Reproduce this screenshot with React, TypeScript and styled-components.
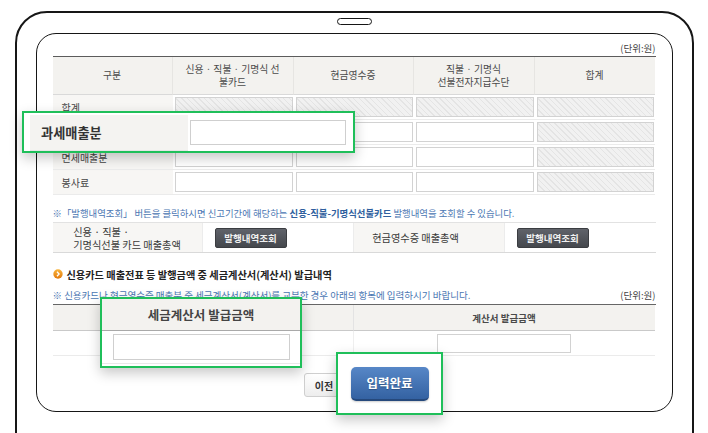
import React from "react";
import styled, { createGlobalStyle } from "styled-components";

const GlobalStyle = createGlobalStyle`
  html, body {
    margin: 0;
    padding: 0;
    background: #fff;
  }
  body {
    font-family: "Noto Sans CJK KR", "Noto Sans", sans-serif;
    color: #444;
  }
  * {
    box-sizing: border-box;
  }
`;

const Stage = styled.div`
  position: relative;
  width: 708px;
  height: 433px;
  overflow: hidden;
  background: #fff;
  padding: 11px 0 0 15px;
`;

const Tablet = styled.div`
  width: 679px;
  height: 480px;
  border: 2px solid #161616;
  border-radius: 32px;
  display: flex;
  flex-direction: column;
  align-items: center;
`;

const Speaker = styled.div`
  margin-top: 5px;
  width: 35px;
  height: 7px;
  border: 1.5px solid #161616;
  border-radius: 4px;
`;

const Screen = styled.div`
  margin-top: 8px;
  width: 637px;
  height: 379px;
  border: 1.5px solid #161616;
  border-radius: 20px;
  padding: 3px 16.5px 0 15.5px;
`;

const UnitRow = styled.div`
  height: 19px;
  line-height: 16px;
  text-align: right;
`;

const Unit = styled.span`
  font-size: 9.5px;
  color: #444;
`;

/* ---------- sales table ---------- */

const SalesGrid = styled.div`
  display: grid;
  grid-template-columns: 120px 121px 120px 121px 120px;
  grid-template-rows: 38px repeat(4, 25px);
  border-top: 1px solid #5c5c5c;
`;

const HeadCell = styled.div<{ $last?: boolean }>`
  display: flex;
  align-items: center;
  justify-content: center;
  text-align: center;
  background: #f3f2ef;
  border-bottom: 1px solid #d9d9d9;
  border-right: ${(p) => (p.$last ? "none" : "1px solid #e6e5e2")};
  font-size: 9.8px;
  line-height: 13px;
  color: #4a4a4a;
`;

const RowLabel = styled.div`
  display: flex;
  align-items: center;
  padding-left: 9px;
  background: #f7f6f4;
  border-bottom: 1px solid #ebebeb;
  font-size: 10px;
  color: #444;
`;

const FieldCell = styled.div`
  padding: 2px 1px 0 2px;
  border-bottom: 1px solid #ebebeb;
`;

const Field = styled.div<{ $locked?: boolean }>`
  height: 20px;
  border: 1px solid #d2d2d2;
  background: ${(p) =>
    p.$locked
      ? "repeating-linear-gradient(45deg, #e4e4e4 0 1px, #f1f1f1 1px 4px)"
      : "#fff"};
`;

/* ---------- notes / lookup ---------- */

const Note = styled.div`
  margin: 10px 0 1px;
  height: 16px;
  line-height: 16px;
  font-size: 9.4px;
  color: #4a76b2;
  white-space: nowrap;

  b {
    font-weight: 700;
    color: #2f5f9e;
  }
`;

const LookupGrid = styled.div`
  display: grid;
  grid-template-columns: 150px 151px 151px 150px;
  height: 31px;
  border-top: 1px solid #e2e2e2;
  border-bottom: 1px solid #d9d9d9;
`;

const LookupLabel = styled.div<{ $shift?: number }>`
  display: flex;
  align-items: center;
  justify-content: center;
  padding-right: ${(p) => p.$shift ?? 0}px;
  background: #f7f6f4;
  border-right: 1px solid #ececec;
  font-size: 10.2px;
  line-height: 13px;
  color: #3a3a3a;

  span {
    text-align: left;
  }
`;

const LookupAction = styled.div`
  display: flex;
  align-items: center;
  padding-left: 12px;
  border-right: 1px solid #ececec;

  &:last-child {
    border-right: none;
  }
`;

const DarkButton = styled.button`
  width: 72px;
  height: 20px;
  padding: 0;
  border: 1px solid #3b3d41;
  border-radius: 2px;
  background: linear-gradient(#60636a, #45484d);
  color: #f0f0f0;
  font-family: inherit;
  font-size: 9.5px;
  font-weight: 700;
  cursor: pointer;
`;

const SectionTitle = styled.h3`
  margin: 13px 0 0;
  height: 16px;
  display: flex;
  align-items: center;
  gap: 4px;
  font-size: 10.2px;
  font-weight: 700;
  color: #222;
`;

const NoteRow = styled.div`
  margin: 5px 0 1px;
  height: 16px;
  display: flex;
  align-items: center;
  justify-content: space-between;
`;

const InlineNote = styled(Note)`
  margin: 0;
  font-size: 9.5px;
`;

/* ---------- invoice table ---------- */

const InvoiceGrid = styled.div`
  display: grid;
  grid-template-columns: 301px 301px;
  grid-template-rows: 26px 25px;
  border-top: 1px solid #666;
`;

const InvoiceHead = styled.div<{ $first?: boolean }>`
  display: flex;
  align-items: center;
  justify-content: center;
  background: #f3f2ef;
  border-bottom: 1px solid #c9c9c9;
  border-right: ${(p) => (p.$first ? "1px solid #e3e3e3" : "none")};
  font-size: 9.5px;
  font-weight: 700;
  color: #4a4a4a;
`;

const InvoiceCell = styled.div<{ $first?: boolean }>`
  display: flex;
  align-items: center;
  justify-content: center;
  border-bottom: 1px solid #ebebeb;
  border-right: ${(p) => (p.$first ? "1px solid #efefef" : "none")};
`;

const AmountInput = styled.div`
  width: 134px;
  height: 19px;
  border: 1px solid #d2d2d2;
  background: #fff;
`;

const Actions = styled.div`
  margin-top: 17px;
  display: flex;
  justify-content: center;
  gap: 4px;
`;

const PrevButton = styled.button`
  width: 40px;
  height: 24px;
  padding: 0;
  border: 1px solid #cfcfcf;
  border-radius: 3px;
  background: linear-gradient(#ffffff, #ededed);
  color: #333;
  font-family: inherit;
  font-size: 10px;
  font-weight: 700;
`;

const SubmitButton = styled.button<{ $large?: boolean }>`
  width: ${(p) => (p.$large ? 78 : 56)}px;
  height: ${(p) => (p.$large ? 34 : 24)}px;
  padding: 0;
  border: none;
  border-bottom: 2px solid #26497c;
  border-radius: ${(p) => (p.$large ? 5 : 3)}px;
  background: linear-gradient(#5787c7, #3462a2);
  color: #fff;
  font-family: inherit;
  font-weight: 700;
  font-size: ${(p) => (p.$large ? 12.5 : 9.5)}px;
  text-shadow: 0 1px 1px rgba(0, 0, 0, 0.25);
  box-shadow: 0 1px 2px rgba(0, 0, 0, 0.2);
`;

/* ---------- zoom callouts ---------- */

const Callout = styled.div`
  position: absolute;
  border: 2px solid #1fbf5a;
  background: #fff;
  box-shadow: 0 5px 12px rgba(0, 0, 0, 0.22);
`;

const TaxableCallout = styled(Callout)`
  left: 22px;
  top: 111px;
  width: 333px;
  height: 42px;
  display: flex;
  align-items: center;
  padding: 1px 7px 0 6px;
`;

const CalloutLabel = styled.div`
  width: 158px;
  height: 36px;
  display: flex;
  align-items: center;
  padding-left: 11px;
  background: #f4f3f1;
  border-bottom: 1px solid #e6e6e6;
  font-size: 13.2px;
  font-weight: 700;
  color: #333;
`;

const CalloutInput = styled.div<{ $width: number; $height: number }>`
  width: ${(p) => p.$width}px;
  height: ${(p) => p.$height}px;
  border: 1px solid #cfcfcf;
  background: #fff;
`;

const TaxableInput = styled(CalloutInput)`
  margin-left: 2px;
`;

const InvoiceCallout = styled(Callout)`
  left: 100px;
  top: 297px;
  width: 202px;
  height: 71px;
  display: flex;
  flex-direction: column;
`;

const CalloutHead = styled.div`
  height: 32px;
  display: flex;
  align-items: center;
  justify-content: center;
  background: #f3f2ef;
  border-bottom: 1px solid #a9a9a9;
  font-size: 12.5px;
  font-weight: 700;
  color: #444;
`;

const CalloutBody = styled.div`
  flex: 1;
  padding: 3px 10px 0 11px;
  border-bottom: 1px solid #e9e9e9;
  margin-bottom: 2px;
`;

const SubmitCallout = styled(Callout)`
  left: 336px;
  top: 352px;
  width: 107px;
  height: 63px;
  display: flex;
  align-items: center;
  justify-content: center;
`;

function Bullet() {
  return (
    <svg width="10" height="10" viewBox="0 0 10 10">
      <defs>
        <linearGradient id="bulletFill" x1="0" y1="0" x2="0" y2="1">
          <stop offset="0" stopColor="#f8b43c" />
          <stop offset="1" stopColor="#e3790c" />
        </linearGradient>
      </defs>
      <circle cx="5" cy="5" r="4.7" fill="url(#bulletFill)" />
      <path d="M4 2.8 L6.1 5 L4 7.2" stroke="#fff" strokeWidth="1.3" fill="none" />
    </svg>
  );
}

const salesRows = [
  { label: "합계", locked: [true, true, true, true] },
  { label: "과세매출분", locked: [false, false, false, true] },
  { label: "면세매출분", locked: [false, false, false, true] },
  { label: "봉사료", locked: [false, false, false, true] },
];

export default function App() {
  return (
    <>
      <GlobalStyle />
      <Stage>
        <Tablet>
          <Speaker />
          <Screen>
            <UnitRow>
              <Unit>(단위:원)</Unit>
            </UnitRow>

            <SalesGrid>
              <HeadCell>구분</HeadCell>
              <HeadCell>
                신용 · 직불 · 기명식 선<br />불카드
              </HeadCell>
              <HeadCell>현금영수증</HeadCell>
              <HeadCell>
                직불 · 기명식
                <br />
                선불전자지급수단
              </HeadCell>
              <HeadCell $last>합계</HeadCell>
              {salesRows.map((row) => (
                <React.Fragment key={row.label}>
                  <RowLabel>{row.label}</RowLabel>
                  {row.locked.map((locked, i) => (
                    <FieldCell key={i}>
                      <Field $locked={locked} />
                    </FieldCell>
                  ))}
                </React.Fragment>
              ))}
            </SalesGrid>

            <Note>
              ※「발행내역조회」 버튼을 클릭하시면 신고기간에 해당하는{" "}
              <b>신용-직불-기명식선불카드</b> 발행내역을 조회할 수 있습니다.
            </Note>

            <LookupGrid>
              <LookupLabel>
                <span>
                  신용 · 직불 ·
                  <br />
                  기명식선불 카드 매출총액
                </span>
              </LookupLabel>
              <LookupAction>
                <DarkButton>발행내역조회</DarkButton>
              </LookupAction>
              <LookupLabel $shift={26}>
                <span>현금영수증 매출총액</span>
              </LookupLabel>
              <LookupAction>
                <DarkButton>발행내역조회</DarkButton>
              </LookupAction>
            </LookupGrid>

            <SectionTitle>
              <Bullet />
              신용카드 매출전표 등 발행금액 중 세금계산서(계산서) 발급내역
            </SectionTitle>

            <NoteRow>
              <InlineNote>
                ※ 신용카드나 현금영수증 매출분 중 세금계산서(계산서)를 교부한 경우 아래의 항목에
                입력하시기 바랍니다.
              </InlineNote>
              <Unit>(단위:원)</Unit>
            </NoteRow>

            <InvoiceGrid>
              <InvoiceHead $first>세금계산서 발급금액</InvoiceHead>
              <InvoiceHead>계산서 발급금액</InvoiceHead>
              <InvoiceCell $first>
                <AmountInput />
              </InvoiceCell>
              <InvoiceCell>
                <AmountInput />
              </InvoiceCell>
            </InvoiceGrid>

            <Actions>
              <PrevButton>이전</PrevButton>
              <SubmitButton>입력완료</SubmitButton>
            </Actions>
          </Screen>
        </Tablet>

        <TaxableCallout>
          <CalloutLabel>과세매출분</CalloutLabel>
          <TaxableInput $width={156} $height={25} />
        </TaxableCallout>

        <InvoiceCallout>
          <CalloutHead>세금계산서 발급금액</CalloutHead>
          <CalloutBody>
            <CalloutInput $width={177} $height={26} />
          </CalloutBody>
        </InvoiceCallout>

        <SubmitCallout>
          <SubmitButton $large>입력완료</SubmitButton>
        </SubmitCallout>
      </Stage>
    </>
  );
}
